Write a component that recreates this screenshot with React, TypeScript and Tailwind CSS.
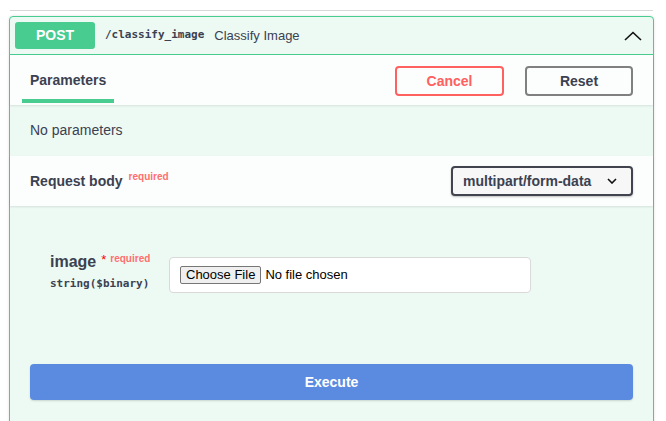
import React from 'react';

const sans = { fontFamily: '"Liberation Sans", Arial, sans-serif' };

const App: React.FC = () => {
  return (
    <div className="w-[666px] h-[421px] overflow-hidden bg-white text-[#3b4151] font-['Liberation_Sans',Arial,sans-serif]">
      <div className="pt-[10px] px-[9px]">
        {/* divider above the operation */}
        <div className="h-px bg-[#d8d8d8] ml-px mr-[4px]" />

        {/* operation block */}
        <div className="mt-[5px] w-[645px] border border-[#49cc90] rounded-[4px] bg-[#edfaf4] shadow-[0_0_3px_rgba(0,0,0,0.12)]">
          {/* summary row */}
          <div className="flex items-center h-[38px] px-[5px] border-b border-[#49cc90]">
            <div className="w-[80px] h-[27px] rounded-[3px] bg-[#49cc90] text-white text-[14px] font-bold flex items-center justify-center">
              POST
            </div>
            <span className="ml-[10px] text-[11px] font-semibold font-['DejaVu_Sans_Mono',monospace] text-[#3b4151]">
              /classify_image
            </span>
            <span className="ml-[10px] text-[13px] text-[#3b4151]">Classify Image</span>
            <svg className="ml-auto mr-[6px]" width="18" height="10" viewBox="0 0 18 10" fill="none">
              <path d="M1 9L9 1.5L17 9" stroke="#111" strokeWidth="1.6" />
            </svg>
          </div>

          {/* parameters header */}
          <div className="flex items-center h-[50px] pl-[12px] pr-[20px] bg-[#fcfefd] shadow-[0_1px_2px_rgba(0,0,0,0.1)] relative">
            <div className="relative h-full flex items-center px-[8px]">
              <span className="text-[14px] font-bold">Parameters</span>
              <div className="absolute left-0 right-0 bottom-[2px] h-[4px] bg-[#49cc90]" />
            </div>
            <div className="ml-auto mt-[2px] flex gap-[21px]">
              <button className="w-[109px] h-[30px] border-2 border-[#ff6060] rounded-[4px] text-[#ff6060] text-[14px] font-bold bg-transparent" style={sans}>
                Cancel
              </button>
              <button className="w-[108px] h-[30px] border-2 border-[#808080] rounded-[4px] text-[#3b4151] text-[14px] font-bold bg-transparent" style={sans}>
                Reset
              </button>
            </div>
          </div>

          {/* no parameters */}
          <div className="h-[51px] flex items-center px-[20px] text-[14px]">No parameters</div>

          {/* request body header */}
          <div className="flex items-center h-[50px] pl-[20px] pr-[20px] bg-[#fcfefd] shadow-[0_1px_2px_rgba(0,0,0,0.1)] relative">
            <span className="text-[14px] font-bold">Request body</span>
            <span className="ml-[6px] -mt-[10px] text-[10px] font-semibold text-[#ff6f6f]">required</span>
            <div className="ml-auto w-[182px] h-[30px] flex items-center pl-[10px] pr-[14px] border-2 border-[#41444e] rounded-[4px] bg-[#f7f7f7] shadow-[0_1px_2px_rgba(0,0,0,0.25)]">
              <span className="text-[14px] font-bold">multipart/form-data</span>
              <svg className="ml-auto" width="10" height="6" viewBox="0 0 10 6" fill="none">
                <path d="M1 1L5 5L9 1" stroke="#111" strokeWidth="1.6" />
              </svg>
            </div>
          </div>

          {/* body */}
          <div className="pt-[51px] px-[20px]">
            <div className="flex items-center pl-[20px]">
              <div className="w-[119px] -mt-[4px]">
                <div className="flex items-start">
                  <span className="text-[16px] font-bold leading-[18px]">image</span>
                  <span className="ml-[5px] text-[13px] text-[#ff0000] leading-[14px]">*</span>
                  <span className="ml-[4px] text-[10px] text-[#ff6f6f] font-semibold leading-[12px]">required</span>
                </div>
                <div className="mt-[5px] text-[11px] font-semibold font-['DejaVu_Sans_Mono',monospace] text-[#3b4151]">
                  string($binary)
                </div>
              </div>
              <div className="w-[362px] h-[36px] flex items-center pl-[10px] bg-white border border-[#d9d9d9] rounded-[4px]">
                <span className="h-[18px] px-[5px] flex items-center text-[13px] text-black bg-[#efefef] border border-[#767676] rounded-[2px]" style={sans}>
                  Choose File
                </span>
                <span className="ml-[4px] text-[13px] text-black" style={sans}>No file chosen</span>
              </div>
            </div>

            <button className="mt-[71px] w-[603px] h-[36px] rounded-[4px] bg-[#5b8be1] text-white text-[14px] font-bold shadow-[0_1px_2px_rgba(0,0,0,0.15)]" style={sans}>
              Execute
            </button>
          </div>
          <div className="h-[40px]" />
        </div>
      </div>
    </div>
  );
};

export default App;
